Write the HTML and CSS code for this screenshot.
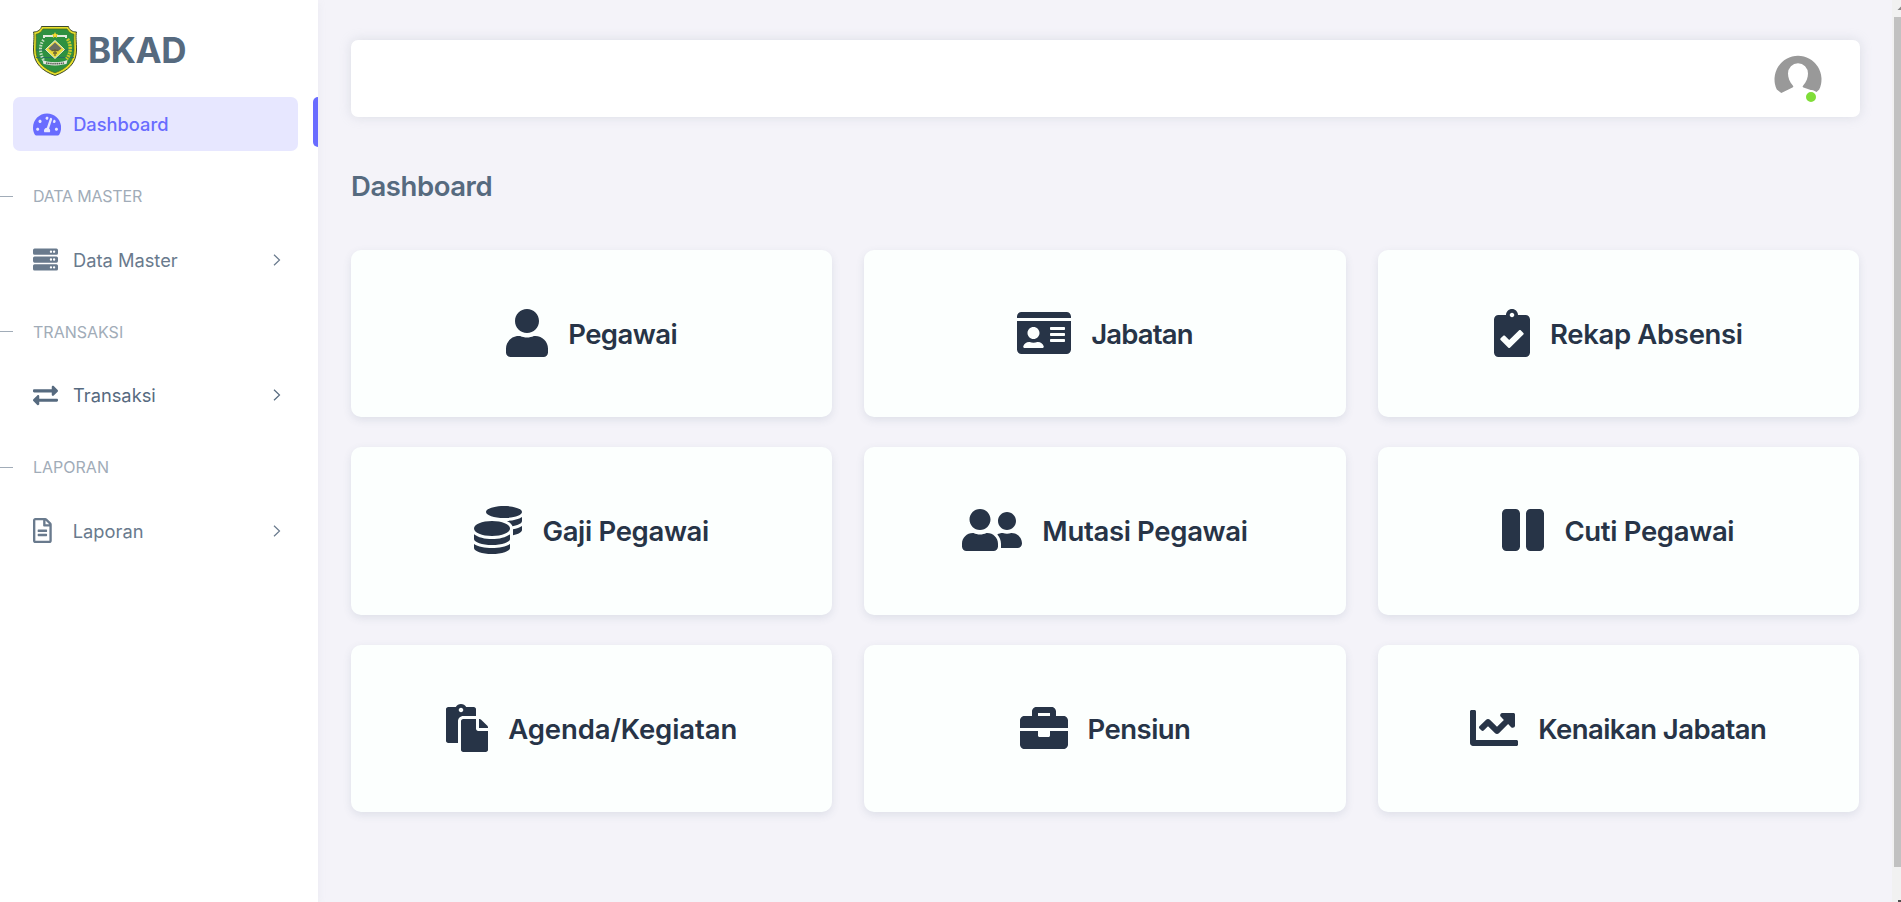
FILE: index.html
```html
<!DOCTYPE html>
<html lang="id">
<head>
<meta charset="utf-8">
<title>Dashboard - BKAD</title>
<link rel="stylesheet" href="styles.css">
</head>
<body>
<div class="layout">
  <aside class="sidebar">
    <a class="brand">
      <svg class="brand-logo" viewBox="0 0 44 50">
        <path d="M8.500 0.500H35.500C36 3.500 39 6 43.500 6C42.500 10 43.500 16 43.500 24C43.500 37 35 45 22 49.500C9 45 0.500 37 0.500 24C0.500 16 1.500 10 0.500 6C5 6 8 3.500 8.500 0.500Z" fill="#e8e02a" stroke="#3d4a2c"/>
        <path d="M10 3H34C35.500 6 38 7.800 41 8.300C40.500 12 41 18 41 24C41 35 34 42.500 22 46.800C10 42.500 3 35 3 24C3 18 3.500 12 3 8.300C6 7.800 8.500 6 10 3Z" fill="#2e9140" stroke="#4c6a1f" stroke-width=".8"/>
        <path d="M3 24H41M3 31.500H41" stroke="#27646c" stroke-width=".8"/>
        <path d="M11 12V10H20M33 12V10H24" fill="none" stroke="#e4ebdd" stroke-width="2"/>
        <path d="M22 6L23 8.300H25.300L23.500 9.800L24.200 12L22 10.700L19.800 12L20.500 9.800L18.700 8.300H21Z" fill="#ffd92c"/>
        <path d="M22 14.500L31.500 23.500L22 32.500L12.500 23.500Z" fill="#eadb38" stroke="#e9eee3"/>
        <path d="M15.500 22.500L22 16.500L28.500 22.500L26 24.500H18Z" fill="#6b6e62"/>
        <path d="M18.500 24.500H25.500M20 27H24M22 23V30" stroke="#6b6434" stroke-width="1.300"/>
        <path d="M10.500 14C6.500 19 6.500 27 10.500 34" fill="none" stroke="#c3dcc2" stroke-width="3" stroke-dasharray="1.500 1.300"/>
        <path d="M34.500 13C38.500 19 38 28 33.500 33" fill="none" stroke="#c6c928" stroke-width="3.500" stroke-dasharray="2 .8"/>
        <path d="M9.500 34L14 35.500Q22 37 30 35.500L34.500 34L33.500 38L30 38.500Q22 40.500 14 38.500L10.500 38Z" fill="#e5e8e1"/>
        <path d="M13 37Q22 38.500 31 37" fill="none" stroke="#565e55" stroke-width="1.600" stroke-dasharray="1.500 .6"/>
      </svg>
      <span class="brand-name">BKAD</span>
    </a>
    <nav class="menu">
      <a class="menu-item active">
        <svg class="menu-icon" viewBox="0 0 576 512"><path d="M288 32C128.940 32 0 160.940 0 320c0 52.800 14.250 102.260 39.060 144.800 5.610 9.620 16.300 15.200 27.440 15.200h443c11.140 0 21.830-5.580 27.440-15.200C561.750 422.260 576 372.800 576 320c0-159.060-128.940-288-288-288zm0 64c14.710 0 26.580 10.130 30.320 23.650-1.110 2.260-2.640 4.230-3.450 6.670l-9.220 27.670c-5.130 3.490-10.970 6.010-17.640 6.010-17.670 0-32-14.330-32-32S270.330 96 288 96zM96 384c-17.670 0-32-14.330-32-32s14.330-32 32-32 32 14.330 32 32-14.330 32-32 32zm48-160c-17.670 0-32-14.330-32-32s14.330-32 32-32 32 14.330 32 32-14.330 32-32 32zm246.770-72.410l-61.330 184C343.130 347.330 352 364.540 352 384c0 11.720-3.380 22.550-8.880 32H232.880c-5.500-9.450-8.880-20.280-8.880-32 0-33.940 26.500-61.430 59.900-63.590l61.340-184.010c4.170-12.560 17.730-19.450 30.360-15.170 12.570 4.190 19.350 17.790 15.170 30.360zm14.660 57.200l15.520-46.550c3.470-1.290 7.130-2.230 11.050-2.230 17.670 0 32 14.330 32 32s-14.330 32-32 32c-11.380-.010-20.890-6.280-26.570-15.220zM480 384c-17.670 0-32-14.330-32-32s14.330-32 32-32 32 14.330 32 32-14.330 32-32 32z"/></svg>
        <span class="menu-text">Dashboard</span>
      </a>
      <div class="menu-header"><span class="snug">DATA MASTER</span></div>
      <a class="menu-item">
        <svg class="menu-icon" viewBox="0 0 512 512"><path fill-rule="evenodd" d="M32 32H480a32 32 0 0 1 32 32v64a32 32 0 0 1-32 32H32a32 32 0 0 1-32-32V64a32 32 0 0 1 32-32zM344 96a24 24 0 1 0 48 0a24 24 0 1 0-48 0zM408 96a24 24 0 1 0 48 0a24 24 0 1 0-48 0zM32 192H480a32 32 0 0 1 32 32v64a32 32 0 0 1-32 32H32a32 32 0 0 1-32-32V224a32 32 0 0 1 32-32zM344 256a24 24 0 1 0 48 0a24 24 0 1 0-48 0zM408 256a24 24 0 1 0 48 0a24 24 0 1 0-48 0zM32 352H480a32 32 0 0 1 32 32v64a32 32 0 0 1-32 32H32a32 32 0 0 1-32-32V384a32 32 0 0 1 32-32zM344 416a24 24 0 1 0 48 0a24 24 0 1 0-48 0zM408 416a24 24 0 1 0 48 0a24 24 0 1 0-48 0z"/></svg>
        <span class="menu-text">Data Master</span>
        <svg class="chevron" viewBox="0 0 8 12"><path d="M1 .7L6.500 6L1 11.300"/></svg>
      </a>
      <div class="menu-header"><span>TRANSAKSI</span></div>
      <a class="menu-item dark">
        <svg class="menu-icon" viewBox="0 0 512 512"><path d="M0 168v-16c0-13.255 10.745-24 24-24h360V80c0-21.367 25.899-32.042 40.971-16.971l80 80c9.372 9.373 9.372 24.569 0 33.941l-80 80C409.956 271.982 384 261.456 384 240v-48H24c-13.255 0-24-10.745-24-24zm488 152H128v-48c0-21.314-25.862-32.080-40.971-16.971l-80 80c-9.372 9.373-9.372 24.569 0 33.941l80 80C102.057 463.997 128 453.437 128 432v-48h360c13.255 0 24-10.745 24-24v-16c0-13.255-10.745-24-24-24z"/></svg>
        <span class="menu-text">Transaksi</span>
        <svg class="chevron" viewBox="0 0 8 12"><path d="M1 .7L6.500 6L1 11.300"/></svg>
      </a>
      <div class="menu-header"><span>LAPORAN</span></div>
      <a class="menu-item">
        <svg class="menu-icon" viewBox="0 0 384 512"><path d="M288 248v28c0 6.600-5.400 12-12 12H108c-6.600 0-12-5.400-12-12v-28c0-6.600 5.400-12 12-12h168c6.600 0 12 5.400 12 12zm-12 72H108c-6.600 0-12 5.400-12 12v28c0 6.600 5.400 12 12 12h168c6.600 0 12-5.400 12-12v-28c0-6.600-5.400-12-12-12zm108-188.100V464c0 26.500-21.500 48-48 48H48c-26.500 0-48-21.500-48-48V48C0 21.500 21.500 0 48 0h204.100C264.800 0 277 5.100 286 14.100L369.900 98c9 8.900 14.100 21.200 14.100 33.900zm-128-80V128h76.100L256 51.900zM336 464V176H232c-13.300 0-24-10.700-24-24V48H48v416h288z"/></svg>
        <span class="menu-text">Laporan</span>
        <svg class="chevron" viewBox="0 0 8 12"><path d="M1 .7L6.500 6L1 11.300"/></svg>
      </a>
    </nav>
  </aside>

  <main class="content">
    <header class="navbar">
      <div class="avatar">
        <svg viewBox="0 0 48 48">
          <path d="M7.300 36L2.800 32.500A23.500 23.500 0 1 1 45.200 32.500L42.500 35L29.500 30.500C28.300 30 28.500 29.300 29 28.700C32.500 25 34 20.500 34 16.500A10 10.300 0 0 0 14 16.500C14 20.500 15.500 25 19 28.700C19.500 29.300 19.500 30 18.500 30.500Z" fill="#999"/>
        </svg>
        <span class="status"></span>
      </div>
    </header>
    <h1 class="page-title">Dashboard</h1>
    <section class="cards">
      <a class="card">
        <svg viewBox="0 0 448 512"><path d="M224 256c70.700 0 128-57.300 128-128S294.700 0 224 0 96 57.300 96 128s57.300 128 128 128zm89.600 32h-16.700c-22.200 10.200-46.900 16-72.900 16s-50.600-5.800-72.900-16h-16.700C60.200 288 0 348.200 0 422.400V464c0 26.500 21.500 48 48 48h352c26.500 0 48-21.500 48-48v-41.600c0-74.200-60.200-134.400-134.400-134.400z"/></svg>
        <span class="tight">Pegawai</span>
      </a>
      <a class="card">
        <svg viewBox="0 0 576 512"><path d="M528 32H48C21.500 32 0 53.500 0 80v16h576V80c0-26.500-21.500-48-48-48zM0 432c0 26.500 21.500 48 48 48h480c26.500 0 48-21.500 48-48V128H0v304zm352-232c0-4.400 3.600-8 8-8h144c4.400 0 8 3.600 8 8v16c0 4.400-3.600 8-8 8H360c-4.400 0-8-3.600-8-8v-16zm0 64c0-4.400 3.600-8 8-8h144c4.400 0 8 3.600 8 8v16c0 4.400-3.600 8-8 8H360c-4.400 0-8-3.600-8-8v-16zm0 64c0-4.400 3.600-8 8-8h144c4.400 0 8 3.600 8 8v16c0 4.400-3.600 8-8 8H360c-4.400 0-8-3.600-8-8v-16zM176 192c35.300 0 64 28.700 64 64s-28.700 64-64 64-64-28.700-64-64 28.700-64 64-64zM67.100 396.200C75.500 370.500 99.600 352 128 352h8.200c12.300 5.100 25.700 8 39.800 8s27.600-2.900 39.800-8h8.200c28.400 0 52.500 18.500 60.900 44.200 3.200 9.900-5.200 19.800-15.600 19.800H82.700c-10.400 0-18.800-10-15.600-19.800z"/></svg>
        <span class="tighter">Jabatan</span>
      </a>
      <a class="card">
        <svg viewBox="0 0 384 512"><path d="M336 64h-80c0-35.300-28.700-64-64-64s-64 28.700-64 64H48C21.500 64 0 85.500 0 112v352c0 26.500 21.500 48 48 48h288c26.500 0 48-21.500 48-48V112c0-26.500-21.500-48-48-48zM192 40c13.300 0 24 10.700 24 24s-10.700 24-24 24-24-10.700-24-24 10.700-24 24-24zm121.200 231.800l-143 141.800c-4.700 4.700-12.300 4.600-17-.1l-82.600-83.300c-4.700-4.700-4.600-12.300.1-17L99.100 285c4.700-4.700 12.300-4.600 17 .1l46 46.400 106-105.200c4.700-4.700 12.300-4.600 17 .1l28.200 28.400c4.700 4.800 4.600 12.300-.1 17z"/></svg>
        <span>Rekap Absensi</span>
      </a>
      <a class="card">
        <svg viewBox="0 0 512 512"><path d="M0 405.300V448c0 35.300 86 64 192 64s192-28.700 192-64v-42.700C342.700 434.400 267.200 448 192 448S41.300 434.400 0 405.300zM320 128c106 0 192-28.700 192-64S426 0 320 0 128 28.700 128 64s86 64 192 64zM0 300.400V352c0 35.300 86 64 192 64s192-28.700 192-64v-51.600c-41.300 34-116.900 51.600-192 51.600S41.300 334.400 0 300.400zm416 11c57.300-11.100 96-31.700 96-55.400v-42.700c-23.200 16.400-57.300 27.600-96 34.500v63.600zM192 160C86 160 0 195.800 0 240s86 80 192 80 192-35.800 192-80-86-80-192-80zm219.300 56.300c60-10.800 100.700-32 100.700-56.300v-42.700c-35.500 25.100-96.500 38.600-160.700 41.800 29.500 14.300 51.200 33.500 60 57.200z"/></svg>
        <span>Gaji Pegawai</span>
      </a>
      <a class="card">
        <svg viewBox="0 0 640 512"><path d="M192 256c61.900 0 112-50.100 112-112S253.900 32 192 32 80 82.100 80 144s50.100 112 112 112zm76.800 32h-8.300c-20.800 10-43.900 16-68.500 16s-47.600-6-68.500-16h-8.300C51.600 288 0 339.600 0 403.200V432c0 26.500 21.500 48 48 48h288c26.500 0 48-21.500 48-48v-28.800c0-63.600-51.600-115.200-115.200-115.200zM480 256c53 0 96-43 96-96s-43-96-96-96-96 43-96 96 43 96 96 96zm48 32h-3.800c-13.900 4.800-28.600 8-44.200 8s-30.300-3.200-44.200-8H432c-20.400 0-39.200 5.900-55.700 15.400 24.400 26.300 39.700 61.200 39.700 99.800v38.400c0 2.200-.5 4.300-.6 6.400H592c26.500 0 48-21.500 48-48 0-61.900-50.100-112-112-112z"/></svg>
        <span>Mutasi Pegawai</span>
      </a>
      <a class="card">
        <svg viewBox="0 0 448 512"><path d="M144 479H48c-26.500 0-48-21.500-48-48V79c0-26.500 21.500-48 48-48h96c26.500 0 48 21.500 48 48v352c0 26.500-21.500 48-48 48zm304-48V79c0-26.500-21.500-48-48-48h-96c-26.500 0-48 21.500-48 48v352c0 26.500 21.500 48 48 48h96c26.500 0 48-21.500 48-48z"/></svg>
        <span>Cuti Pegawai</span>
      </a>
      <a class="card">
        <svg viewBox="0 0 448 512"><path d="M128 184c0-30.879 25.122-56 56-56h136V56c0-13.255-10.745-24-24-24h-80.610C204.306 12.890 183.637 0 160 0s-44.306 12.890-55.390 32H24C10.745 32 0 42.745 0 56v336c0 13.255 10.745 24 24 24h104V184zm32-144c13.255 0 24 10.745 24 24s-10.745 24-24 24-24-10.745-24-24 10.745-24 24-24zm184 248h104v200c0 13.255-10.745 24-24 24H184c-13.255 0-24-10.745-24-24V184c0-13.255 10.745-24 24-24h136v104c0 13.200 10.800 24 24 24zm104-38.059V256h-96v-96h6.059a24 24 0 0 1 16.970 7.029l65.941 65.941a24.002 24.002 0 0 1 7.030 16.971z"/></svg>
        <span class="loose">Agenda/Kegiatan</span>
      </a>
      <a class="card">
        <svg viewBox="0 0 512 512"><path d="M320 336c0 8.840-7.160 16-16 16h-96c-8.840 0-16-7.160-16-16v-48H0v144c0 25.600 22.400 48 48 48h416c25.600 0 48-22.400 48-48V288H320v48zm144-208h-80V80c0-25.600-22.400-48-48-48H176c-25.600 0-48 22.400-48 48v48H48c-25.600 0-48 22.400-48 48v80h512v-80c0-25.600-22.400-48-48-48zm-144 0H192V96h128v32z"/></svg>
        <span class="tight">Pensiun</span>
      </a>
      <a class="card">
        <svg viewBox="0 0 512 512"><path d="M496 384H64V80c0-8.840-7.160-16-16-16H16C7.160 64 0 71.160 0 80v336c0 17.670 14.330 32 32 32h464c8.840 0 16-7.160 16-16v-32c0-8.840-7.160-16-16-16zM464 96H345.940c-21.380 0-32.090 25.850-16.970 40.970l32.400 32.400L288 242.750l-73.370-73.370c-12.500-12.500-32.760-12.500-45.250 0l-68.690 68.690c-6.250 6.250-6.250 16.380 0 22.630l22.620 22.620c6.250 6.250 16.380 6.250 22.630 0L192 237.250l73.370 73.370c12.500 12.500 32.760 12.500 45.250 0l96-96 32.400 32.400c15.120 15.120 40.970 4.410 40.970-16.970V112c.010-8.840-7.150-16-15.990-16z"/></svg>
        <span class="tight">Kenaikan Jabatan</span>
      </a>
    </section>
  </main>

  <div class="scrollbar">
    <svg class="scroll-up" viewBox="0 0 9 17"><path d="M5.500 10L10 5.500V10Z"/></svg>
    <div class="scroll-thumb"></div>
    <div class="scroll-down"></div>
  </div>
</div>
</body>
</html>
```
FILE: styles.css
```css
* { box-sizing: border-box; }

body {
  margin: 0;
  background: #f4f3f9;
  color: #697a8d;
  font-family: Inter, "Liberation Sans", sans-serif;
  overflow: hidden;
}

.layout { display: flex; height: 902px; }

.sidebar {
  flex: 0 0 318px;
  background: #fff;
  box-shadow: 0 2px 8px rgba(161, 172, 184, .12);
}

.brand {
  display: flex;
  align-items: center;
  gap: 11px;
  height: 97px;
  padding: 5px 0 0 33px;
}
.brand-logo { width: 44px; height: 50px; }
.brand-name {
  margin-top: -2px;
  color: #566a7f;
  font-size: 35px;
  font-weight: 700;
  letter-spacing: -.4px;
}

.menu { display: flex; flex-direction: column; }
.menu-item {
  position: relative;
  display: flex;
  align-items: center;
  height: 54px;
  margin: 0 20px 0 13px;
  padding: 0 17px 0 20px;
  border-radius: 7px;
  font-size: 18.3px;
}
.menu-item.dark { color: #566a7f; }
.menu-item.active { background: #e7e7ff; color: #696cff; font-weight: 500; }
.menu-item.active::after {
  content: "";
  position: absolute;
  top: 0;
  right: -20px;
  width: 5px;
  height: 50px;
  border-radius: 5px 0 0 5px;
  background: #696cff;
}
.menu-icon { height: 25px; fill: currentColor; }
.menu-text { flex: 1; }
.menu-icon + .menu-text { margin-left: 15px; }
.menu-icon[viewBox="0 0 576 512"] + .menu-text { margin-left: 12px; }
.menu-icon[viewBox="0 0 384 512"] + .menu-text { margin-left: 21px; }
.chevron { width: 8px; height: 12px; fill: none; stroke: currentColor; stroke-width: 1.2; }

.menu-header {
  display: flex;
  align-items: center;
  gap: 20px;
  height: 81.5px;
  padding-top: 9px;
  color: #a1acb8;
  font-size: 16px;
}
.menu-header::before { content: ""; width: 13px; height: 1px; background: #a1acb8; }
.menu-header .snug { letter-spacing: -.2px; }

.content { flex: 1; padding: 40px 32px 0 33px; }

.navbar {
  display: flex;
  align-items: center;
  justify-content: flex-end;
  height: 77px;
  padding-right: 38px;
  border-radius: 7px;
  background: #fff;
  box-shadow: 0 0 12px rgba(161, 172, 184, .3);
}
.avatar { position: relative; width: 48px; height: 48px; margin-top: 4px; }
.avatar svg { display: block; width: 48px; height: 48px; overflow: visible; }
.status {
  position: absolute;
  right: 4px;
  bottom: 1px;
  width: 14px;
  height: 14px;
  border: 2px solid #fff;
  border-radius: 50%;
  background: #7fdd38;
}

.page-title {
  margin: 51px 0 46px;
  color: #566a7f;
  font-size: 27.5px;
  font-weight: 600;
  line-height: 36px;
  letter-spacing: -.42px;
}

.cards {
  display: grid;
  grid-template-columns: repeat(3, 1fr);
  grid-auto-rows: 167.4px;
  gap: 30.1px 32px;
  margin-right: 1px;
}
.card {
  display: flex;
  align-items: center;
  justify-content: center;
  gap: 20px;
  border-radius: 10px;
  background: #fcfffe;
  box-shadow: 0 3px 9px rgba(67, 89, 113, .12);
  color: #273447;
  font-size: 27.5px;
  font-weight: 600;
  letter-spacing: -.33px;
  white-space: nowrap;
}
.card svg { height: 48px; margin-top: -2px; fill: currentColor; }
.card .tight { letter-spacing: -.55px; }
.card .tighter { letter-spacing: -.85px; }
.card .loose { letter-spacing: -.1px; }

.scrollbar { flex: 0 0 9px; display: flex; flex-direction: column; background: #f1f1f1; }
.scroll-up { width: 9px; height: 17px; fill: #8a8a8a; }
.scroll-thumb { width: 7px; height: 850px; margin-left: 2px; background: #c1c1c1; }
.scroll-down { width: 3px; height: 2px; margin: auto 0 0 auto; background: #505050; }
```
